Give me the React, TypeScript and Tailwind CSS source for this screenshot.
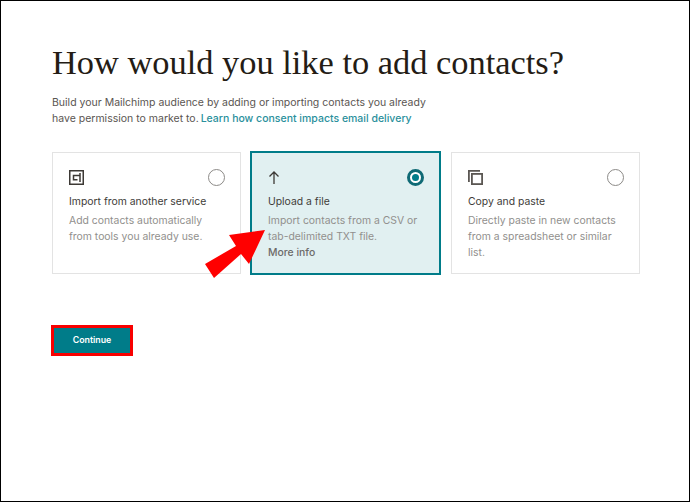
const sans = "font-['Inter','Liberation_Sans',sans-serif]";

function ImportIcon() {
  return (
    <svg width="15" height="15" viewBox="0 0 15 15" fill="none" stroke="#3d3935" strokeWidth="1.5">
      <rect x="0.75" y="0.75" width="13.5" height="13.5" />
      <path d="M11 3V12M11 5.5H4.5V9.8H8.5" />
    </svg>
  );
}

function UploadIcon() {
  return (
    <svg width="12" height="13" viewBox="0 0 12 13" fill="none" stroke="#3d3935" strokeWidth="1.3">
      <path d="M6 13V1M1.5 5.5L6 1L10.5 5.5" />
    </svg>
  );
}

function CopyIcon() {
  return (
    <svg width="15" height="15" viewBox="0 0 15 15" fill="none" stroke="#5b5753" strokeWidth="1.8">
      <rect x="3.9" y="3.9" width="10.2" height="10.2" />
      <path d="M0.9 12V0.9H12" />
    </svg>
  );
}

function Radio({ checked }: { checked?: boolean }) {
  if (checked) {
    return (
      <div className="flex h-[17px] w-[17px] items-center justify-center rounded-full border-[3px] border-[#0f6a75] bg-white">
        <div className="h-[7px] w-[7px] rounded-full bg-[#007c89]" />
      </div>
    );
  }
  return <div className="h-[17px] w-[17px] rounded-full border border-[#8c8a87] bg-white" />;
}

function Card(props: {
  icon: React.ReactNode;
  title: string;
  lines: string;
  more?: boolean;
  checked?: boolean;
}) {
  return (
    <div
      className={
        props.checked
          ? "-my-px -ml-px h-[124px] w-[191px] border-2 border-[#007c89] bg-[#e1f0f1] pb-[15px] pl-[16px] pr-[15px] pt-[15px]"
          : "h-[122px] w-[189px] border border-[#e3e3e3] bg-white pb-[15px] pl-[16px] pr-[15px] pt-[15px]"
      }
    >
      <div className="flex h-[18px] items-center justify-between">
        {props.icon}
        <Radio checked={props.checked} />
      </div>
      <div className="mt-[8px] text-[10.4px] leading-[16px] text-[#403c38]">{props.title}</div>
      <div className="mt-[3px] whitespace-pre-line text-[10.4px] leading-[16px] text-[#918f8d]">{props.lines}</div>
      {props.more && <div className="text-[10.4px] font-medium leading-[16px] text-[#6d6b69]">More info</div>}
    </div>
  );
}

export default function App() {
  return (
    <div className={`relative h-[502px] w-[690px] overflow-hidden border border-black bg-white pl-[51px] pt-[41px] ${sans}`}>
      <h1 className="font-['Liberation_Serif',serif] text-[34.4px] leading-[40px] text-[#241c15]">
        How would you like to add contacts?
      </h1>
      <p className="mt-[13px] text-[10.5px] leading-[16px] text-[#5a5551]">
        Build your Mailchimp audience by adding or importing contacts you already
        <br />
        have permission to market to.{" "}
        <a className="-ml-px font-medium text-[#2a909c]">Learn how consent impacts email delivery</a>
      </p>

      <div className="mt-[25px] flex gap-[10px]">
        <Card
          icon={<ImportIcon />}
          title="Import from another service"
          lines={"Add contacts automatically\nfrom tools you already use."}
        />
        <Card
          checked
          icon={<UploadIcon />}
          title="Upload a file"
          lines={"Import contacts from a CSV or\ntab-delimited TXT file."}
          more
        />
        <Card
          icon={<CopyIcon />}
          title="Copy and paste"
          lines={"Directly paste in new contacts\nfrom a spreadsheet or similar\nlist."}
        />
      </div>

      <button className="-ml-px mt-[51px] flex h-[31px] w-[82px] items-center justify-center border-[3px] border-[#f80000] bg-[#007c89] pb-px text-[8.8px] font-semibold text-white">
        Continue
      </button>

      {/* red callout arrow drawn over the cards */}
      <svg className="absolute left-[-1px] top-[-1px]" width="690" height="502" viewBox="0 0 690 502">
        <polygon points="265,230 229,235 236,246 205,264 214,278 241,254 249,264" fill="#ff0000" />
      </svg>
    </div>
  );
}
